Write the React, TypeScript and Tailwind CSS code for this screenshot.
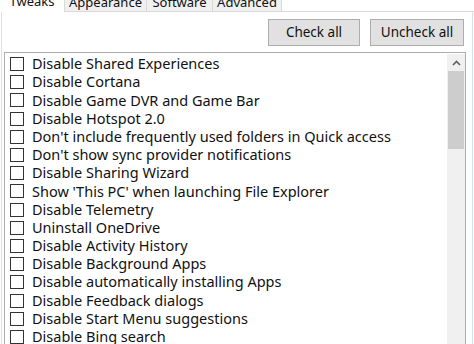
import React, { useState } from 'react';

const tweaks = [
  'Disable Shared Experiences',
  'Disable Cortana',
  'Disable Game DVR and Game Bar',
  'Disable Hotspot 2.0',
  "Don't include frequently used folders in Quick access",
  "Don't show sync provider notifications",
  'Disable Sharing Wizard',
  "Show 'This PC' when launching File Explorer",
  'Disable Telemetry',
  'Uninstall OneDrive',
  'Disable Activity History',
  'Disable Background Apps',
  'Disable automatically installing Apps',
  'Disable Feedback dialogs',
  'Disable Start Menu suggestions',
  'Disable Bing search',
  'Disable Error reporting',
];

const tabs = [
  { name: 'Tweaks', w: 'w-[65px]' },
  { name: 'Appearance', w: 'w-[82px]' },
  { name: 'Software', w: 'w-[66px]' },
  { name: 'Advanced', w: 'w-[69px]' },
];

export default function App() {
  const [checked, setChecked] = useState<boolean[]>(tweaks.map(() => false));

  return (
    <div
      className="w-[474px] h-[344px] overflow-hidden bg-white text-[#111] text-[14.5px]"
      style={{ fontFamily: '"Noto Sans", "Open Sans", sans-serif' }}
    >
      {/* tab strip, cut off at the top of the shot */}
      <div className="flex items-end h-[22px] -mt-[10px] border-b border-[#d9d9d9] text-[13px] leading-[16px]">
        {tabs.map((t, i) => (
          <div
            key={t.name}
            className={
              i === 0
                ? `h-[23px] ${t.w} bg-white border-r border-[#d9d9d9] flex items-start justify-center pt-[4px] -mb-px`
                : `h-[21px] ${t.w} bg-[#f0f0f0] border border-l-0 border-b-0 border-[#d9d9d9] flex items-start justify-center pt-[3px]`
            }
          >
            {t.name}
          </div>
        ))}
      </div>

      {/* tab page */}
      <div className="h-[400px] ml-[1px] mr-[1px] border-l border-r border-[#d9e1ea] px-[2px]">
        <div className="flex justify-end gap-[10px] pt-[7px] pr-[6px] text-[13.5px]">
          <button
            onClick={() => setChecked(tweaks.map(() => true))}
            className="w-[92px] h-[27px] bg-[#e1e1e1] border border-[#adadad] leading-none"
          >
            Check all
          </button>
          <button
            onClick={() => setChecked(tweaks.map(() => false))}
            className="w-[94px] h-[27px] bg-[#e1e1e1] border border-[#adadad] leading-none"
          >
            Uncheck all
          </button>
        </div>

        <div className="mt-[6px] mr-[4px] border border-[#adadad] flex h-[320px]">
          <div className="flex-1 pt-[2px] pl-[5px]">
            {tweaks.map((t, i) => (
              <label key={t} className="flex items-center h-[18.2px] whitespace-nowrap">
                <span
                  onClick={() => {
                    const next = [...checked];
                    next[i] = !next[i];
                    setChecked(next);
                  }}
                  className="w-[14px] h-[14px] shrink-0 border border-[#333333] bg-white mr-[8px] flex items-center justify-center"
                >
                  {checked[i] && (
                    <svg width="9" height="9" viewBox="0 0 9 9">
                      <path d="M1 4.5 L3.5 7 L8 1.5" fill="none" stroke="#333" strokeWidth="1.5" />
                    </svg>
                  )}
                </span>
                {t}
              </label>
            ))}
          </div>

          {/* scrollbar */}
          <div className="w-[18px] bg-[#f0f0f0] flex flex-col mt-px">
            <div className="h-[17px] flex items-center justify-center">
              <svg width="9" height="6" viewBox="0 0 9 6">
                <path d="M1 5 L4.5 1.5 L8 5" fill="none" stroke="#606060" strokeWidth="1.6" />
              </svg>
            </div>
            <div className="mx-[1px] h-[78px] bg-[#cdcdcd]" />
          </div>
        </div>
      </div>
    </div>
  );
}
